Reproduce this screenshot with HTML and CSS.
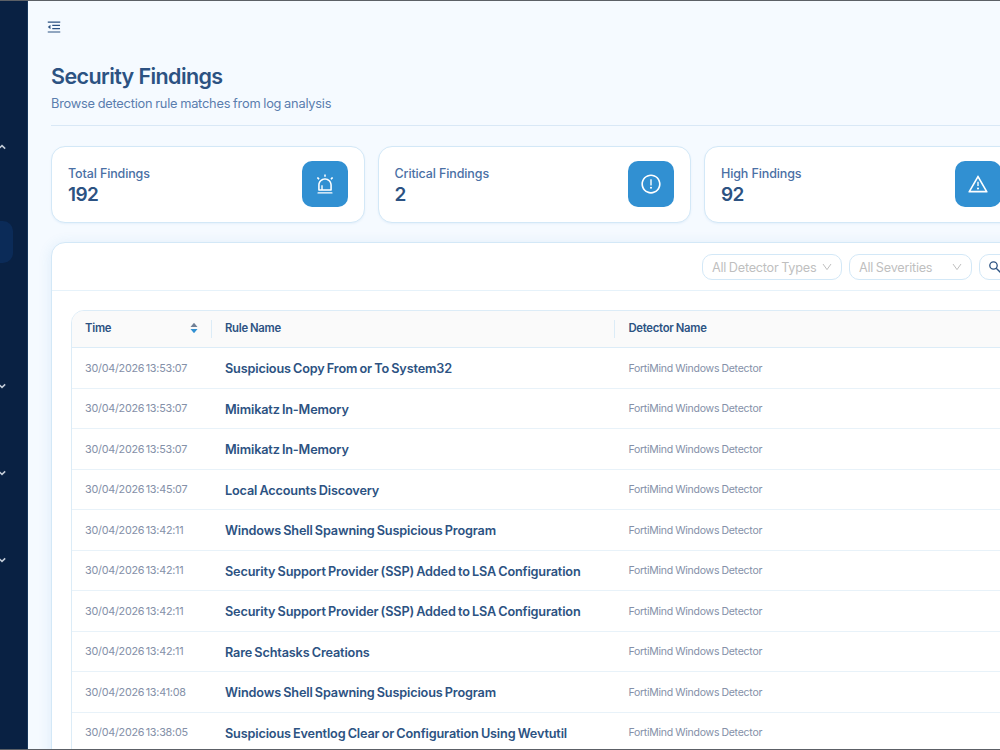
FILE: index.html
```html
<!DOCTYPE html>
<html lang="en">

<head>
    <meta charset="UTF-8">
    <meta name="viewport" content="width=device-width, initial-scale=1.0">
    <title>Security Findings</title>
    <link rel="stylesheet" href="styles.css">
</head>

<body>
    <div class="app">
        <aside class="sidebar">
            <div class="menu-item first"><svg class="caret" viewBox="0 0 10 10"><path d="M1.8 6.6L5 3.6l3.2 3"/></svg></div>
            <div class="menu-item active"></div>
            <div class="menu-item"><svg class="caret" viewBox="0 0 10 10"><path d="M1.8 3.4L5 6.4l3.2-3"/></svg></div>
            <div class="menu-item"><svg class="caret" viewBox="0 0 10 10"><path d="M1.8 3.4L5 6.4l3.2-3"/></svg></div>
            <div class="menu-item"><svg class="caret" viewBox="0 0 10 10"><path d="M1.8 3.4L5 6.4l3.2-3"/></svg></div>
        </aside>

        <main class="main">
            <div class="topbar">
                <svg class="fold" viewBox="0 0 1024 1024"><path d="M408 442h480c4.400 0 8-3.600 8-8v-56c0-4.400-3.600-8-8-8H408c-4.400 0-8 3.600-8 8v56c0 4.400 3.600 8 8 8zm-8 204c0 4.400 3.600 8 8 8h480c4.400 0 8-3.600 8-8v-56c0-4.400-3.600-8-8-8H408c-4.400 0-8 3.600-8 8v56zm504-486H120c-4.400 0-8 3.600-8 8v56c0 4.400 3.600 8 8 8h784c4.400 0 8-3.600 8-8v-56c0-4.400-3.600-8-8-8zm0 632H120c-4.400 0-8 3.600-8 8v56c0 4.400 3.600 8 8 8h784c4.400 0 8-3.600 8-8v-56c0-4.400-3.600-8-8-8zM115.400 518.900L271.700 642c5.800 4.600 14.400.5 14.400-6.900V388.900c0-7.400-8.500-11.500-14.400-6.900L115.400 505.100a8.740 8.740 0 0 0 0 13.800z"/></svg>
            </div>

            <header class="page-head">
                <h1>Security Findings</h1>
                <p>Browse detection rule matches from log analysis</p>
            </header>

            <section class="stats">
                <div class="stat">
                    <div class="stat-text">
                        <span class="stat-label">Total Findings</span>
                        <span class="stat-value">192</span>
                    </div>
                    <div class="stat-icon">
                        <svg viewBox="0 0 1024 1024"><path d="M193 796c0 17.700 14.300 32 32 32h574c17.700 0 32-14.300 32-32V563c0-176.200-142.800-319-319-319S193 386.800 193 563v233zm72-233c0-136.400 110.600-247 247-247s247 110.600 247 247v193H404V585c0-5.500-4.500-10-10-10h-44c-5.500 0-10 4.500-10 10v171h-75V563zm-48.100-252.500l39.600-39.600c3.100-3.100 3.100-8.200 0-11.300l-67.900-67.900c-3.100-3.100-8.200-3.100-11.300 0l-39.600 39.600a8.030 8.030 0 0 0 0 11.300l67.900 67.900c3.100 3.100 8.100 3.100 11.300 0zm669.600-79.200l-39.600-39.600c-3.100-3.100-8.200-3.100-11.300 0l-67.900 67.900a8.030 8.030 0 0 0 0 11.300l39.600 39.600c3.100 3.100 8.200 3.100 11.300 0l67.900-67.900c3.100-3.200 3.100-8.200 0-11.300zM832 892H192c-17.700 0-32 14.300-32 32v24c0 4.400 3.600 8 8 8h688c4.400 0 8-3.600 8-8v-24c0-17.700-14.300-32-32-32zM484 180h56c4.400 0 8-3.600 8-8V76c0-4.400-3.600-8-8-8h-56c-4.400 0-8 3.600-8 8v96c0 4.400 3.600 8 8 8z"/></svg>
                    </div>
                </div>
                <div class="stat">
                    <div class="stat-text">
                        <span class="stat-label">Critical Findings</span>
                        <span class="stat-value">2</span>
                    </div>
                    <div class="stat-icon">
                        <svg viewBox="0 0 1024 1024"><path d="M512 64C264.600 64 64 264.600 64 512s200.600 448 448 448 448-200.600 448-448S759.400 64 512 64zm0 820c-205.400 0-372-166.600-372-372s166.600-372 372-372 372 166.600 372 372-166.600 372-372 372z"/><path d="M464 688a48 48 0 1 0 96 0 48 48 0 1 0-96 0zm24-112h48c4.400 0 8-3.600 8-8V296c0-4.400-3.600-8-8-8h-48c-4.400 0-8 3.600-8 8v272c0 4.400 3.600 8 8 8z"/></svg>
                    </div>
                </div>
                <div class="stat">
                    <div class="stat-text">
                        <span class="stat-label">High Findings</span>
                        <span class="stat-value">92</span>
                    </div>
                    <div class="stat-icon">
                        <svg viewBox="0 0 1024 1024"><path d="M464 720a48 48 0 1 0 96 0 48 48 0 1 0-96 0zm16-304v184c0 4.400 3.600 8 8 8h48c4.400 0 8-3.600 8-8V416c0-4.400-3.600-8-8-8h-48c-4.400 0-8 3.600-8 8zm475.700 440l-416-720c-6.200-10.700-16.900-16-27.700-16s-21.600 5.300-27.700 16l-416 720C56 877.400 71.400 904 96 904h832c24.600 0 40-26.600 27.700-48zm-783.500-27.900L512 239.900l339.800 588.200H172.200z"/></svg>
                    </div>
                </div>
            </section>

            <section class="panel">
                <div class="filters">
                    <div class="select types">
                        <span>All Detector Types</span>
                        <svg viewBox="0 0 10 10"><path d="M1 2l4 5.600L9 2"/></svg>
                    </div>
                    <div class="select severities">
                        <span>All Severities</span>
                        <svg viewBox="0 0 10 10"><path d="M1 2l4 5.600L9 2"/></svg>
                    </div>
                    <div class="search">
                        <svg viewBox="0 0 14 14"><circle cx="5.500" cy="5.500" r="3.700"/><path d="M8.200 8.200l4.300 4.300"/></svg>
                    </div>
                </div>

                <div class="table">
                    <div class="row head">
                        <div class="cell">
                            <span>Time</span>
                            <svg class="sorter" viewBox="0 0 8 12"><path class="up" d="M.5 5L4 .8 7.500 5z"/><path class="down" d="M.5 7L4 11.200 7.500 7z"/></svg>
                        </div>
                        <div class="cell">Rule Name</div>
                        <div class="cell">Detector Name</div>
                    </div>
                    <div class="row">
                        <div class="cell time">30/04/2026 13:53:07</div>
                        <div class="cell rule">Suspicious Copy From or To System32</div>
                        <div class="cell detector">FortiMind Windows Detector</div>
                    </div>
                    <div class="row">
                        <div class="cell time">30/04/2026 13:53:07</div>
                        <div class="cell rule">Mimikatz In-Memory</div>
                        <div class="cell detector">FortiMind Windows Detector</div>
                    </div>
                    <div class="row">
                        <div class="cell time">30/04/2026 13:53:07</div>
                        <div class="cell rule">Mimikatz In-Memory</div>
                        <div class="cell detector">FortiMind Windows Detector</div>
                    </div>
                    <div class="row">
                        <div class="cell time">30/04/2026 13:45:07</div>
                        <div class="cell rule">Local Accounts Discovery</div>
                        <div class="cell detector">FortiMind Windows Detector</div>
                    </div>
                    <div class="row">
                        <div class="cell time">30/04/2026 13:42:11</div>
                        <div class="cell rule">Windows Shell Spawning Suspicious Program</div>
                        <div class="cell detector">FortiMind Windows Detector</div>
                    </div>
                    <div class="row">
                        <div class="cell time">30/04/2026 13:42:11</div>
                        <div class="cell rule">Security Support Provider (SSP) Added to LSA Configuration</div>
                        <div class="cell detector">FortiMind Windows Detector</div>
                    </div>
                    <div class="row">
                        <div class="cell time">30/04/2026 13:42:11</div>
                        <div class="cell rule">Security Support Provider (SSP) Added to LSA Configuration</div>
                        <div class="cell detector">FortiMind Windows Detector</div>
                    </div>
                    <div class="row">
                        <div class="cell time">30/04/2026 13:42:11</div>
                        <div class="cell rule">Rare Schtasks Creations</div>
                        <div class="cell detector">FortiMind Windows Detector</div>
                    </div>
                    <div class="row">
                        <div class="cell time">30/04/2026 13:41:08</div>
                        <div class="cell rule">Windows Shell Spawning Suspicious Program</div>
                        <div class="cell detector">FortiMind Windows Detector</div>
                    </div>
                    <div class="row">
                        <div class="cell time">30/04/2026 13:38:05</div>
                        <div class="cell rule">Suspicious Eventlog Clear or Configuration Using Wevtutil</div>
                        <div class="cell detector">FortiMind Windows Detector</div>
                    </div>
                </div>
            </section>
        </main>
    </div>
</body>

</html>
```
FILE: styles.css
```css
* {
    margin: 0;
    padding: 0;
    box-sizing: border-box;
}

body {
    height: 750px;
    overflow: hidden;
    font-family: Inter, "Liberation Sans", sans-serif;
    color: #2c5282;
    background-color: #f5faff;
}

.app {
    display: flex;
    height: 750px;
    overflow: hidden;
    border-top: 1px solid #5c6066;
    border-bottom: 1px solid #5c6066;
}

.sidebar {
    flex: none;
    width: 28px;
    height: 748px;
    padding-top: 125px;
    background-color: #092143;
    border-right: 1px solid #17365a;
}

.menu-item {
    display: flex;
    align-items: center;
    width: 13px;
    height: 42px;
    margin-bottom: 45px;
}

.menu-item.first {
    margin-bottom: 53px;
}

.menu-item.active {
    margin-bottom: 102px;
    border-radius: 0 10px 10px 0;
    background-color: #0b2b58;
}

.caret {
    width: 10px;
    height: 10px;
    margin-left: -3px;
    fill: none;
    stroke: #c3ccd8;
    stroke-width: 1.5;
}

.main {
    flex: none;
    width: 1339px;
    padding: 0 23px;
}

.topbar {
    height: 52px;
    padding-top: 18px;
    margin-left: -5px;
}

.fold {
    display: block;
    width: 16px;
    height: 16px;
    fill: #2c5282;
}

.page-head {
    height: 73px;
    padding-top: 8px;
    border-bottom: 1px solid #d9e8f6;
}

.page-head h1 {
    font-size: 21.5px;
    line-height: 30px;
    font-weight: 600;
    letter-spacing: -0.6px;
}

.page-head p {
    margin-top: 3px;
    font-size: 12.8px;
    line-height: 20px;
    letter-spacing: -0.22px;
    word-spacing: -0.5px;
    color: #5a7dae;
}

.stats {
    display: grid;
    grid-template-columns: repeat(4, 1fr);
    gap: 13px;
    margin-top: 19.5px;
}

.stat {
    display: flex;
    align-items: center;
    justify-content: space-between;
    height: 77px;
    padding: 0 16px;
    border: 1px solid #d3e8f7;
    border-radius: 14px;
    background-color: #fff;
    box-shadow: 0 1px 2px rgba(49, 130, 206, 0.08);
}

.stat-text {
    display: flex;
    flex-direction: column;
    padding-top: 3px;
}

.stat-label {
    font-size: 12.5px;
    line-height: 18px;
    font-weight: 500;
    letter-spacing: -0.12px;
    color: #4a70a5;
}

.stat-value {
    font-size: 19px;
    line-height: 23px;
    font-weight: 600;
    letter-spacing: -0.6px;
}

.stat-icon {
    display: flex;
    align-items: center;
    justify-content: center;
    width: 46px;
    height: 46px;
    border-radius: 10px;
    background-color: #3190d2;
}

.stat-icon svg {
    width: 22px;
    height: 22px;
    fill: #fff;
}

.panel {
    height: 600px;
    margin-top: 19.5px;
    border: 1px solid #d3e8f7;
    border-radius: 14px;
    background-color: #fff;
    box-shadow: 0 2px 14px rgba(49, 130, 206, 0.12);
}

.filters {
    display: flex;
    align-items: center;
    gap: 7px;
    height: 48px;
    padding-left: 650px;
    border-bottom: 1px solid #e6f2fa;
}

.select {
    display: flex;
    align-items: center;
    justify-content: space-between;
    height: 26px;
    padding: 1px 9px 0;
    border: 1px solid #d3e8f7;
    border-radius: 10px;
    font-size: 12.7px;
    letter-spacing: -0.25px;
    word-spacing: -0.6px;
    white-space: nowrap;
    color: #bfbfbf;
}

.types {
    width: 140px;
}

.severities {
    width: 123px;
}

.select svg {
    flex: none;
    width: 10px;
    height: 10px;
    fill: none;
    stroke: #bfbfbf;
}

.search {
    width: 180px;
    height: 26px;
    padding: 5px 8px;
    border: 1px solid #d3e8f7;
    border-radius: 10px;
}

.search svg {
    display: block;
    width: 14px;
    height: 14px;
    fill: none;
    stroke: #2c5282;
    stroke-width: 1.3;
}

.table {
    margin: 19px 20px 0 19px;
    border: 1px solid #dcecf7;
    border-radius: 13px 13px 0 0;
    overflow: hidden;
}

.row {
    display: grid;
    grid-template-columns: 140px 403.4px 1fr;
    align-items: center;
    height: 40.5px;
    border-bottom: 1px solid #e8f2f9;
}

.row.head {
    height: 37px;
    font-size: 11.3px;
    font-weight: 600;
    letter-spacing: -0.25px;
    word-spacing: -0.5px;
    background-color: #fafafa;
    border-bottom-color: #dcecf7;
}

.cell {
    padding-left: 13px;
    white-space: nowrap;
}

.head .cell {
    display: flex;
    align-items: center;
    justify-content: space-between;
    height: 18px;
    padding-right: 13px;
    padding-bottom: 2px;
    border-right: 1px solid #dcecf7;
}

.sorter {
    width: 8px;
    height: 12px;
}

.sorter .up {
    fill: #718096;
}

.sorter .down {
    fill: #3190d2;
}

.time {
    padding-top: 1px;
    font-size: 10.8px;
    letter-spacing: -0.24px;
    word-spacing: -1.4px;
    color: #8490a8;
}

.rule {
    font-size: 12.7px;
    line-height: 18px;
    padding-top: 3px;
    font-weight: 600;
    letter-spacing: -0.16px;
    word-spacing: -0.8px;
}

.detector {
    padding-top: 1px;
    font-size: 10.5px;
    letter-spacing: -0.25px;
    word-spacing: -0.5px;
    color: #8490a8;
}
```
